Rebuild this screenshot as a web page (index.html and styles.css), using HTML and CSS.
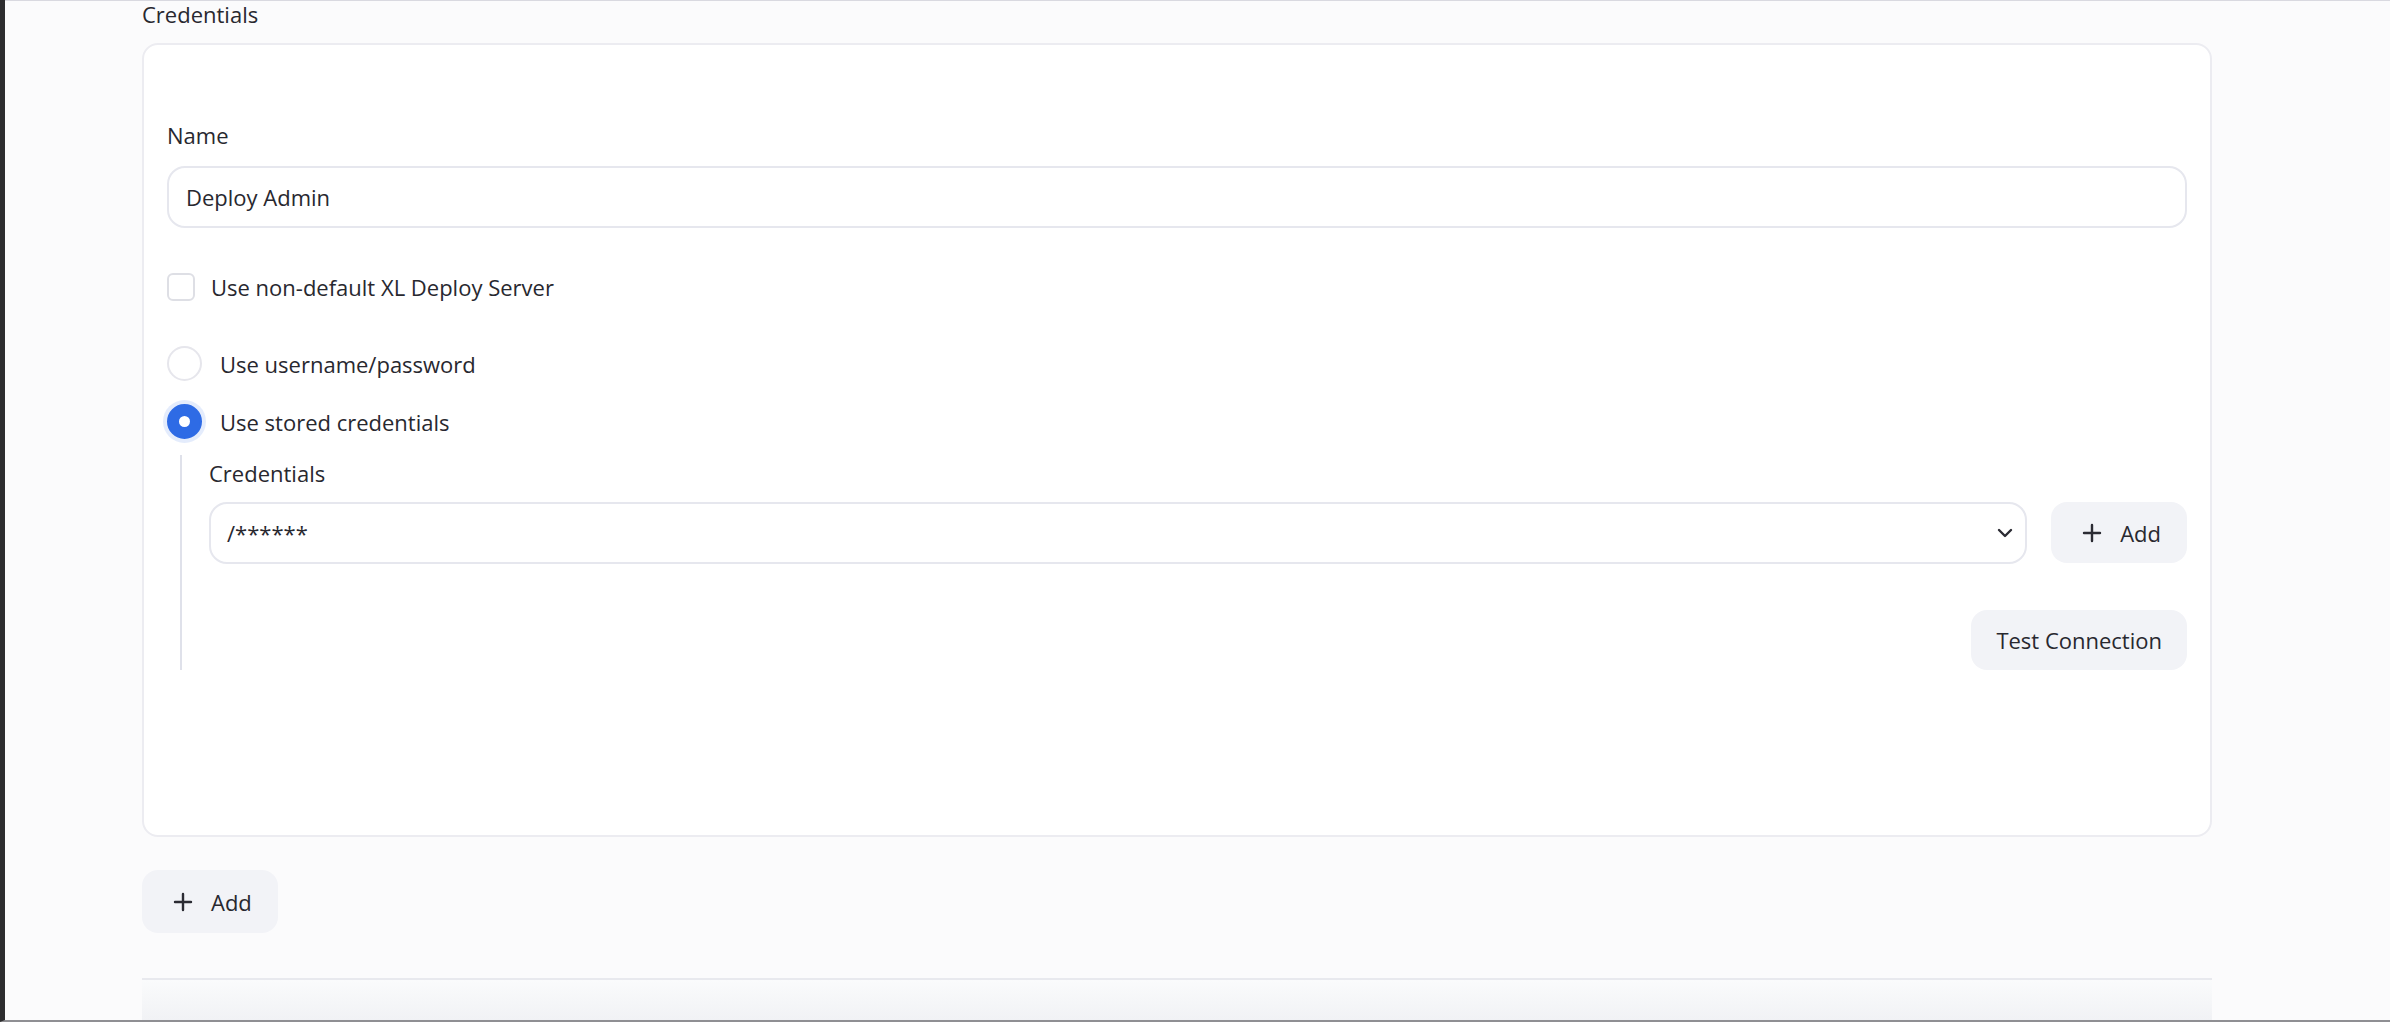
FILE: index.html
```html
<!DOCTYPE html>
<html lang="en">
<head>
    <meta charset="UTF-8">
    <meta name="viewport" content="width=device-width, initial-scale=1.0">
    <title>Credentials</title>
    <link rel="stylesheet" href="styles.css">
</head>
<body>
    <div class="page">
        <div class="section-title">Credentials</div>

        <div class="card">
            <div class="field">
                <div class="label">Name</div>
                <input class="text-input" type="text" value="Deploy Admin">
            </div>

            <label class="check-row">
                <span class="checkbox"></span>
                <span>Use non-default XL Deploy Server</span>
            </label>

            <div class="radio-group">
                <label class="radio-row">
                    <span class="radio"></span>
                    <span>Use username/password</span>
                </label>
                <label class="radio-row">
                    <span class="radio checked"></span>
                    <span>Use stored credentials</span>
                </label>
            </div>

            <div class="nested">
                <div class="label">Credentials</div>
                <div class="select-row">
                    <div class="select">
                        <span>/******</span>
                        <svg class="chevron" width="16" height="10" viewBox="0 0 16 10"><polyline points="2,2 8,8 14,2" fill="none" stroke="#2b2b33" stroke-width="2.4" stroke-linecap="round" stroke-linejoin="round"/></svg>
                    </div>
                    <button class="btn">
                        <svg class="plus" width="20" height="20" viewBox="0 0 20 20"><path d="M10 2v16M2 10h16" stroke="#2b2b33" stroke-width="2.4" stroke-linecap="round"/></svg>
                        <span>Add</span>
                    </button>
                </div>
                <div class="actions">
                    <button class="btn test-btn">Test Connection</button>
                </div>
            </div>
        </div>

        <button class="btn add-btn">
            <svg class="plus" width="20" height="20" viewBox="0 0 20 20"><path d="M10 2v16M2 10h16" stroke="#2b2b33" stroke-width="2.4" stroke-linecap="round"/></svg>
            <span>Add</span>
        </button>

        <div class="divider"></div>
        <div class="footer-fade"></div>
    </div>
</body>
</html>
```

FILE: styles.css
```css
html, body {
    margin: 0;
    height: 100%;
}
body {
    font-family: "Open Sans", "Noto Sans", sans-serif;
    font-size: 22px;
    color: #28282f;
    background: #fbfbfc;
    border-left: 5px solid #2d2d2f;
    border-bottom: 2px solid #8f8f93;
    box-sizing: border-box;
    overflow: hidden;
}
.page {
    border-top: 1px solid #d9d9e0;
    padding: 0 178px 0 137px;
}
.section-title {
    line-height: 27px;
}
.card {
    margin-top: 15px;
    background: #fff;
    border: 2px solid #ececf1;
    border-radius: 16px;
    padding: 76px 23px 165px 23px;
}
.label {
    line-height: 28px;
}
.text-input {
    display: block;
    box-sizing: border-box;
    width: 100%;
    height: 62px;
    margin-top: 17px;
    padding: 0 17px;
    border: 2px solid #e6e7ee;
    border-radius: 18px;
    font-family: inherit;
    font-size: 22px;
    color: #28282f;
    background: #fff;
    outline: none;
}
.check-row, .radio-row {
    display: flex;
    align-items: center;
    line-height: 28px;
}
.check-row {
    margin-top: 45px;
    gap: 16px;
}
.checkbox {
    box-sizing: border-box;
    width: 28px;
    height: 28px;
    border: 2px solid #dedfe5;
    border-radius: 6px;
    background: #fff;
}
.radio-group {
    margin-top: 45px;
    display: flex;
    flex-direction: column;
    gap: 23px;
}
.radio-row {
    gap: 18px;
}
.radio {
    box-sizing: border-box;
    width: 35px;
    height: 35px;
    border: 2px solid #e6e6ec;
    border-radius: 50%;
    background: #fff;
    display: flex;
    align-items: center;
    justify-content: center;
}
.radio.checked {
    background: #2e6be5;
    border-color: #2e6be5;
    box-shadow: 0 0 0 4px rgba(46, 107, 229, 0.13);
}
.radio.checked::after {
    content: "";
    width: 11px;
    height: 11px;
    border-radius: 50%;
    background: #fff;
}
.nested {
    margin: 16px 0 0 13px;
    padding: 4px 0 0 27px;
    border-left: 2px solid #dfe1ea;
}
.select-row {
    display: flex;
    gap: 24px;
    margin-top: 15px;
}
.select {
    flex: 1;
    box-sizing: border-box;
    height: 62px;
    display: flex;
    align-items: center;
    justify-content: space-between;
    padding: 0 12px 0 16px;
    border: 2px solid #e6e7ee;
    border-radius: 18px;
    background: #fff;
}
.btn {
    box-sizing: border-box;
    height: 61px;
    display: flex;
    align-items: center;
    gap: 18px;
    padding: 0 26px 0 31px;
    border: none;
    border-radius: 16px;
    background: #f2f3f7;
    font-family: inherit;
    font-size: 22px;
    color: #28282f;
    cursor: pointer;
}
.actions {
    display: flex;
    justify-content: flex-end;
    margin-top: 46px;
}
.test-btn {
    height: 60px;
    padding: 0 25px;
}
.add-btn {
    margin-top: 33px;
    height: 63px;
}
.divider {
    margin-top: 45px;
    height: 2px;
    background: #e8e9ee;
}
.footer-fade {
    height: 40px;
    background: linear-gradient(#fafbfc, #f1f2f5);
}
```
